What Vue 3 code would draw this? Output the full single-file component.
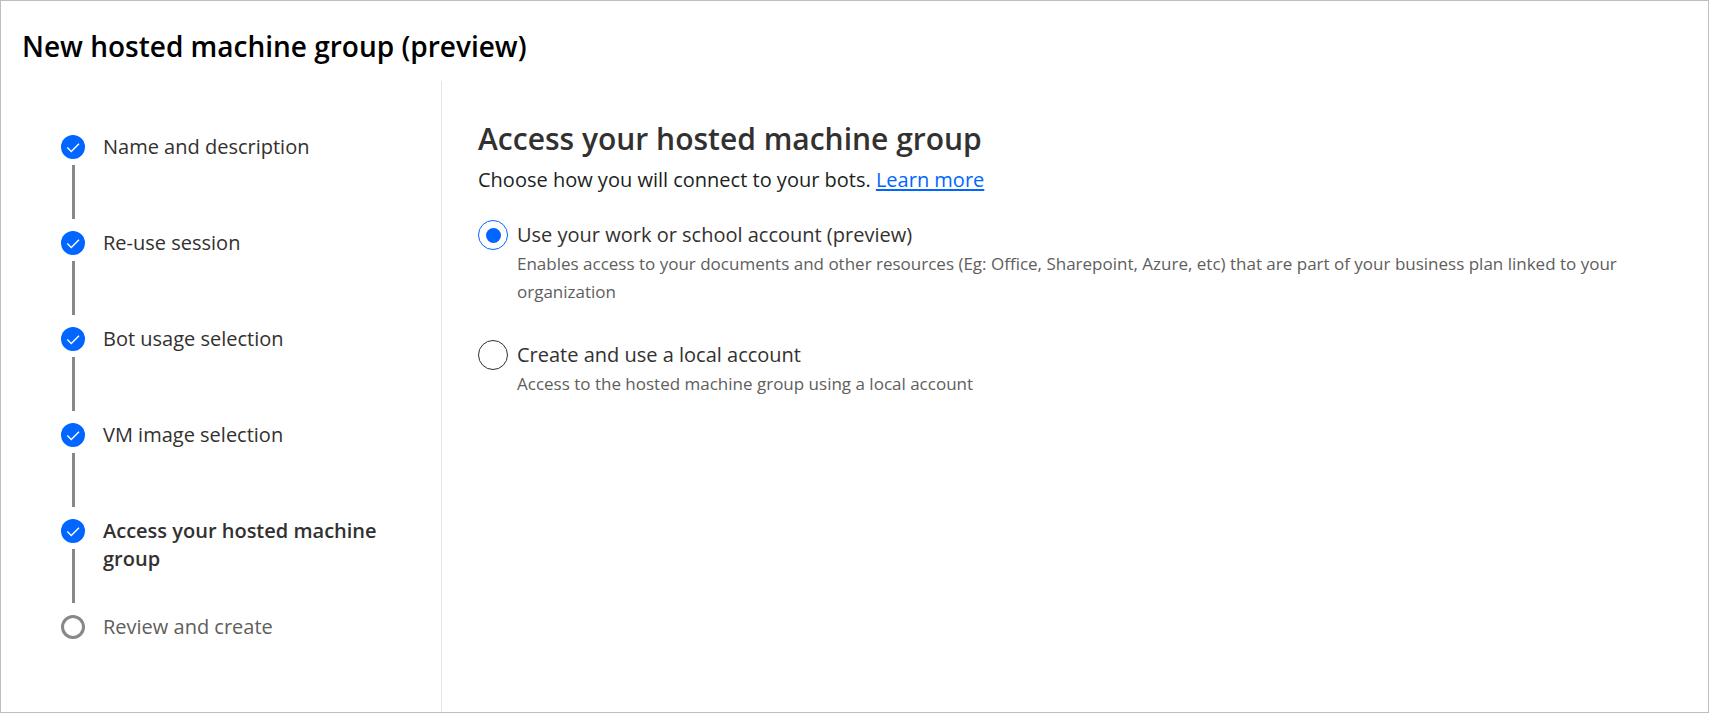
<script setup>
import { ref } from 'vue'

const steps = [
  { label: 'Name and description', state: 'done' },
  { label: 'Re-use session', state: 'done' },
  { label: 'Bot usage selection', state: 'done' },
  { label: 'VM image selection', state: 'done' },
  { label: 'Access your hosted machine group', state: 'done', current: true },
  { label: 'Review and create', state: 'pending' },
]

const options = [
  {
    id: 'work',
    label: 'Use your work or school account (preview)',
    description:
      'Enables access to your documents and other resources (Eg: Office, Sharepoint, Azure, etc) that are part of your business plan linked to your organization',
  },
  {
    id: 'local',
    label: 'Create and use a local account',
    description: 'Access to the hosted machine group using a local account',
  },
]

const account = ref('work')
</script>

<template>
  <div class="wizard">
    <header class="header">
      <h1 class="title">New hosted machine group (preview)</h1>
    </header>
    <div class="body">
      <nav class="sidebar" aria-label="Steps">
        <ol class="steps">
          <li
            v-for="step in steps"
            :key="step.label"
            class="step"
            :class="[step.state, { current: step.current }]"
            :aria-current="step.current ? 'step' : undefined"
          >
            <span class="track">
              <span class="marker">
                <svg v-if="step.state === 'done'" class="check" viewBox="0 0 24 24" aria-hidden="true">
                  <path d="M6.3 12.6 L10.3 16.6 L18 8.7" />
                </svg>
              </span>
              <span class="line"></span>
            </span>
            <span class="step-label">{{ step.label }}</span>
          </li>
        </ol>
      </nav>
      <main class="content">
        <h2 class="heading">Access your hosted machine group</h2>
        <p class="intro">
          Choose how you will connect to your bots. <a class="link" href="#">Learn more</a>
        </p>
        <div class="options" role="radiogroup" aria-label="Account type">
          <div v-for="option in options" :key="option.id" class="option">
            <input
              :id="option.id"
              v-model="account"
              class="radio"
              type="radio"
              name="account"
              :value="option.id"
              :aria-describedby="option.id + '-description'"
            />
            <div class="option-text">
              <label class="option-label" :for="option.id">{{ option.label }}</label>
              <p :id="option.id + '-description'" class="description">{{ option.description }}</p>
            </div>
          </div>
        </div>
      </main>
    </div>
  </div>
</template>

<style>
body {
  margin: 0;
  background: #fff;
}
</style>

<style scoped>
.wizard {
  box-sizing: border-box;
  min-height: 100vh;
  display: flex;
  flex-direction: column;
  border: 1px solid #bebebe;
  background: #fff;
  color: #323130;
  font-family: "Segoe UI", "Open Sans", "Noto Sans", sans-serif;
  font-size: 20px;
  line-height: 28px;
}

.header {
  padding: 25px 21px 15px;
}

.title {
  margin: 0;
  color: #000;
  font-size: 28px;
  font-weight: 600;
  line-height: 40px;
}

.body {
  flex: 1;
  display: flex;
}

.sidebar {
  box-sizing: border-box;
  flex: 0 0 441px;
  padding: 52px 60px;
  border-right: 1px solid #e6e6e6;
}

.steps {
  margin: 0;
  padding: 0;
  list-style: none;
}

.step {
  display: flex;
  gap: 18px;
  min-height: 96px;
}

.step:last-child {
  min-height: 0;
}

.track {
  display: flex;
  flex-direction: column;
  align-items: center;
  gap: 6px;
  padding-top: 2px;
}

.marker {
  box-sizing: border-box;
  width: 24px;
  height: 24px;
  border-radius: 50%;
}

.done .marker {
  background: #0066ff;
}

.pending .marker {
  border: 3px solid #8a8886;
}

.check {
  display: block;
  width: 24px;
  height: 24px;
  fill: none;
  stroke: #fff;
  stroke-width: 1.4;
}

.line {
  width: 3px;
  height: 54px;
  background: #8a8886;
}

.step:last-child .line {
  display: none;
}

.current .step-label {
  font-weight: 600;
}

.pending .step-label {
  color: #605e5c;
}

.content {
  flex: 1;
  min-width: 0;
  padding: 37px 60px 37px 36px;
}

.heading {
  margin: 0;
  font-size: 30px;
  font-weight: 600;
  line-height: 42px;
}

.intro {
  margin: 6px 0 0;
  color: #201f1e;
}

.link {
  color: #0066ff;
  text-decoration: underline;
  text-decoration-thickness: 2px;
  text-underline-offset: 2px;
}

.options {
  display: flex;
  flex-direction: column;
  gap: 34px;
  margin-top: 26px;
}

.option {
  display: flex;
  gap: 9px;
}

.option:first-child {
  min-height: 86px;
}

.radio {
  appearance: none;
  box-sizing: border-box;
  flex: none;
  display: grid;
  place-items: center;
  width: 30px;
  height: 30px;
  margin: 0;
  border: 1px solid #323130;
  border-radius: 50%;
  background: #fff;
}

.radio:checked {
  border-color: #0066ff;
}

.radio:checked::before {
  content: "";
  width: 15px;
  height: 15px;
  border-radius: 50%;
  background: #0066ff;
}

.option-label {
  display: block;
  line-height: 30px;
}

.description {
  margin: 0;
  color: #605e5c;
  font-size: 17px;
}
</style>
